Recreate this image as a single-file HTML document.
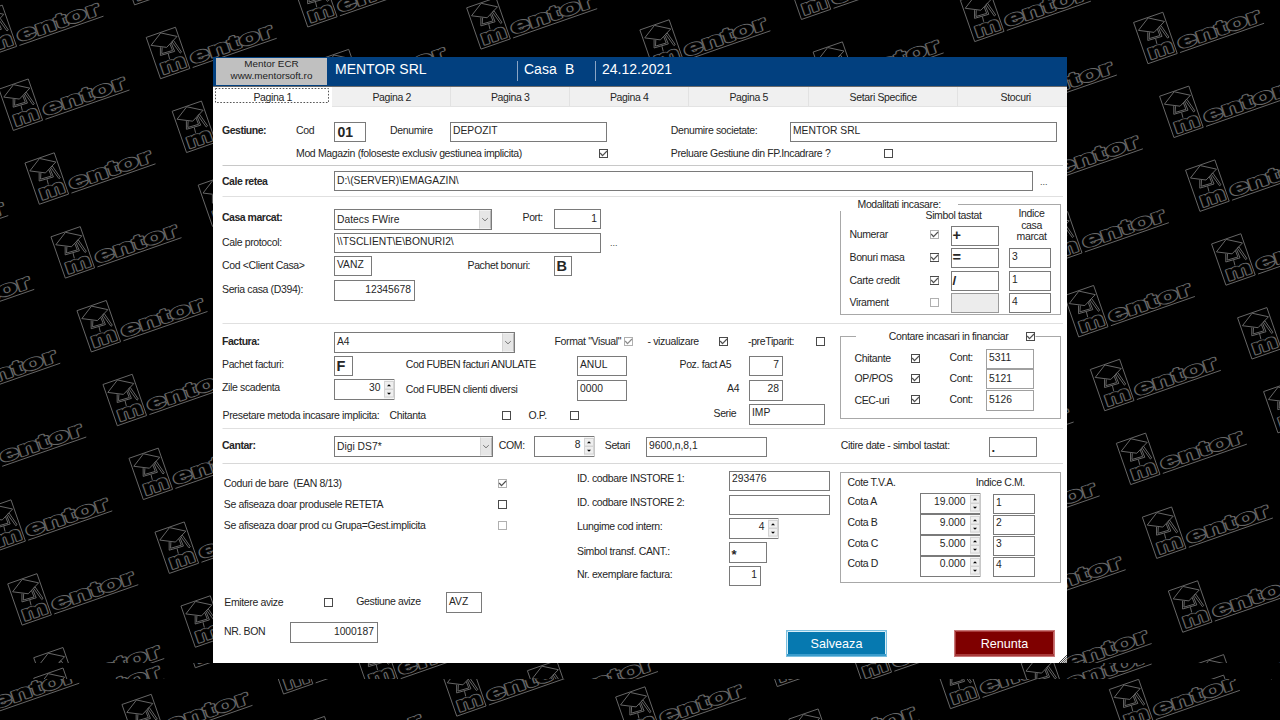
<!DOCTYPE html>
<html><head><meta charset="utf-8"><style>
html,body{margin:0;padding:0;background:#000;width:1280px;height:720px;overflow:hidden}
text{font-family:"Liberation Sans", sans-serif;white-space:pre}
</style></head><body>
<svg width="1280" height="720" viewBox="0 0 1280 720" style="display:block" font-family='"Liberation Sans", sans-serif'><defs><g id="logo" fill="none" stroke="#666666" stroke-width="0.9">
<rect x="0" y="0" width="31" height="43.7"/>
<polygon points="2,9.1 15.25,0.5 29.5,9.2 16.1,16.1"/>
<polyline points="10.2,13.9 7.5,21.7 22.3,22.5 21.8,13.5"/>
<polyline points="11.8,14.6 9.4,20.4 20.6,21.0 20.3,14.2"/>
<polygon points="22.9,12.4 24.8,11.8 28.6,25.4 27,26"/>
<line x1="15.5" y1="22.6" x2="15" y2="28"/>
<g font-family="Liberation Sans" font-weight="bold" font-size="20" stroke-linejoin="round">
<text x="3.5" y="40.5" textLength="26" lengthAdjust="spacingAndGlyphs" fill="#666666" stroke-width="2.4">m</text>
<text x="3.5" y="40.5" textLength="26" lengthAdjust="spacingAndGlyphs" fill="#000" stroke="#000" stroke-width="0.6">m</text>
<text x="35" y="40.5" textLength="86" lengthAdjust="spacingAndGlyphs" fill="#666666" stroke-width="2.4">entor</text>
<text x="35" y="40.5" textLength="86" lengthAdjust="spacingAndGlyphs" fill="#000" stroke="#000" stroke-width="0.6">entor</text>
</g>
<line x1="34" y1="43.7" x2="123" y2="43.7"/>
</g></defs><rect width="1280" height="720" fill="#000"/><defs><g id="bgall"><use href="#logo" transform="translate(-217.50,414.10) rotate(-19.2)"/><use href="#logo" transform="translate(-191.50,487.93) rotate(-19.2)"/><use href="#logo" transform="translate(-165.50,561.76) rotate(-19.2)"/><use href="#logo" transform="translate(-139.50,635.59) rotate(-19.2)"/><use href="#logo" transform="translate(-113.50,709.42) rotate(-19.2)"/><use href="#logo" transform="translate(-226.27,-80.60) rotate(-19.2)"/><use href="#logo" transform="translate(-200.27,-6.77) rotate(-19.2)"/><use href="#logo" transform="translate(-174.27,67.06) rotate(-19.2)"/><use href="#logo" transform="translate(-148.27,140.89) rotate(-19.2)"/><use href="#logo" transform="translate(-122.27,214.72) rotate(-19.2)"/><use href="#logo" transform="translate(-96.27,288.55) rotate(-19.2)"/><use href="#logo" transform="translate(-70.27,362.38) rotate(-19.2)"/><use href="#logo" transform="translate(-44.27,436.21) rotate(-19.2)"/><use href="#logo" transform="translate(-18.27,510.04) rotate(-19.2)"/><use href="#logo" transform="translate(7.73,583.87) rotate(-19.2)"/><use href="#logo" transform="translate(33.73,657.70) rotate(-19.2)"/><use href="#logo" transform="translate(59.73,731.53) rotate(-19.2)"/><use href="#logo" transform="translate(-53.04,-58.49) rotate(-19.2)"/><use href="#logo" transform="translate(-27.04,15.34) rotate(-19.2)"/><use href="#logo" transform="translate(-1.04,89.17) rotate(-19.2)"/><use href="#logo" transform="translate(24.96,163.00) rotate(-19.2)"/><use href="#logo" transform="translate(50.96,236.83) rotate(-19.2)"/><use href="#logo" transform="translate(76.96,310.66) rotate(-19.2)"/><use href="#logo" transform="translate(102.96,384.49) rotate(-19.2)"/><use href="#logo" transform="translate(128.96,458.32) rotate(-19.2)"/><use href="#logo" transform="translate(154.96,532.15) rotate(-19.2)"/><use href="#logo" transform="translate(180.96,605.98) rotate(-19.2)"/><use href="#logo" transform="translate(206.96,679.81) rotate(-19.2)"/><use href="#logo" transform="translate(232.96,753.64) rotate(-19.2)"/><use href="#logo" transform="translate(94.19,-110.21) rotate(-19.2)"/><use href="#logo" transform="translate(120.19,-36.38) rotate(-19.2)"/><use href="#logo" transform="translate(146.19,37.45) rotate(-19.2)"/><use href="#logo" transform="translate(172.19,111.28) rotate(-19.2)"/><use href="#logo" transform="translate(198.19,185.11) rotate(-19.2)"/><use href="#logo" transform="translate(224.19,258.94) rotate(-19.2)"/><use href="#logo" transform="translate(250.19,332.77) rotate(-19.2)"/><use href="#logo" transform="translate(276.19,406.60) rotate(-19.2)"/><use href="#logo" transform="translate(302.19,480.43) rotate(-19.2)"/><use href="#logo" transform="translate(328.19,554.26) rotate(-19.2)"/><use href="#logo" transform="translate(354.19,628.09) rotate(-19.2)"/><use href="#logo" transform="translate(380.19,701.92) rotate(-19.2)"/><use href="#logo" transform="translate(406.19,775.75) rotate(-19.2)"/><use href="#logo" transform="translate(267.42,-88.10) rotate(-19.2)"/><use href="#logo" transform="translate(293.42,-14.27) rotate(-19.2)"/><use href="#logo" transform="translate(319.42,59.56) rotate(-19.2)"/><use href="#logo" transform="translate(345.42,133.39) rotate(-19.2)"/><use href="#logo" transform="translate(371.42,207.22) rotate(-19.2)"/><use href="#logo" transform="translate(397.42,281.05) rotate(-19.2)"/><use href="#logo" transform="translate(423.42,354.88) rotate(-19.2)"/><use href="#logo" transform="translate(449.42,428.71) rotate(-19.2)"/><use href="#logo" transform="translate(475.42,502.54) rotate(-19.2)"/><use href="#logo" transform="translate(501.42,576.37) rotate(-19.2)"/><use href="#logo" transform="translate(527.42,650.20) rotate(-19.2)"/><use href="#logo" transform="translate(553.42,724.03) rotate(-19.2)"/><use href="#logo" transform="translate(440.65,-65.99) rotate(-19.2)"/><use href="#logo" transform="translate(466.65,7.84) rotate(-19.2)"/><use href="#logo" transform="translate(492.65,81.67) rotate(-19.2)"/><use href="#logo" transform="translate(518.65,155.50) rotate(-19.2)"/><use href="#logo" transform="translate(544.65,229.33) rotate(-19.2)"/><use href="#logo" transform="translate(570.65,303.16) rotate(-19.2)"/><use href="#logo" transform="translate(596.65,376.99) rotate(-19.2)"/><use href="#logo" transform="translate(622.65,450.82) rotate(-19.2)"/><use href="#logo" transform="translate(648.65,524.65) rotate(-19.2)"/><use href="#logo" transform="translate(674.65,598.48) rotate(-19.2)"/><use href="#logo" transform="translate(700.65,672.31) rotate(-19.2)"/><use href="#logo" transform="translate(726.65,746.14) rotate(-19.2)"/><use href="#logo" transform="translate(587.88,-117.71) rotate(-19.2)"/><use href="#logo" transform="translate(613.88,-43.88) rotate(-19.2)"/><use href="#logo" transform="translate(639.88,29.95) rotate(-19.2)"/><use href="#logo" transform="translate(665.88,103.78) rotate(-19.2)"/><use href="#logo" transform="translate(691.88,177.61) rotate(-19.2)"/><use href="#logo" transform="translate(717.88,251.44) rotate(-19.2)"/><use href="#logo" transform="translate(743.88,325.27) rotate(-19.2)"/><use href="#logo" transform="translate(769.88,399.10) rotate(-19.2)"/><use href="#logo" transform="translate(795.88,472.93) rotate(-19.2)"/><use href="#logo" transform="translate(821.88,546.76) rotate(-19.2)"/><use href="#logo" transform="translate(847.88,620.59) rotate(-19.2)"/><use href="#logo" transform="translate(873.88,694.42) rotate(-19.2)"/><use href="#logo" transform="translate(899.88,768.25) rotate(-19.2)"/><use href="#logo" transform="translate(761.11,-95.60) rotate(-19.2)"/><use href="#logo" transform="translate(787.11,-21.77) rotate(-19.2)"/><use href="#logo" transform="translate(813.11,52.06) rotate(-19.2)"/><use href="#logo" transform="translate(839.11,125.89) rotate(-19.2)"/><use href="#logo" transform="translate(865.11,199.72) rotate(-19.2)"/><use href="#logo" transform="translate(891.11,273.55) rotate(-19.2)"/><use href="#logo" transform="translate(917.11,347.38) rotate(-19.2)"/><use href="#logo" transform="translate(943.11,421.21) rotate(-19.2)"/><use href="#logo" transform="translate(969.11,495.04) rotate(-19.2)"/><use href="#logo" transform="translate(995.11,568.87) rotate(-19.2)"/><use href="#logo" transform="translate(1021.11,642.70) rotate(-19.2)"/><use href="#logo" transform="translate(1047.11,716.53) rotate(-19.2)"/><use href="#logo" transform="translate(934.34,-73.49) rotate(-19.2)"/><use href="#logo" transform="translate(960.34,0.34) rotate(-19.2)"/><use href="#logo" transform="translate(986.34,74.17) rotate(-19.2)"/><use href="#logo" transform="translate(1012.34,148.00) rotate(-19.2)"/><use href="#logo" transform="translate(1038.34,221.83) rotate(-19.2)"/><use href="#logo" transform="translate(1064.34,295.66) rotate(-19.2)"/><use href="#logo" transform="translate(1090.34,369.49) rotate(-19.2)"/><use href="#logo" transform="translate(1116.34,443.32) rotate(-19.2)"/><use href="#logo" transform="translate(1142.34,517.15) rotate(-19.2)"/><use href="#logo" transform="translate(1168.34,590.98) rotate(-19.2)"/><use href="#logo" transform="translate(1194.34,664.81) rotate(-19.2)"/><use href="#logo" transform="translate(1220.34,738.64) rotate(-19.2)"/><use href="#logo" transform="translate(1107.57,-51.38) rotate(-19.2)"/><use href="#logo" transform="translate(1133.57,22.45) rotate(-19.2)"/><use href="#logo" transform="translate(1159.57,96.28) rotate(-19.2)"/><use href="#logo" transform="translate(1185.57,170.11) rotate(-19.2)"/><use href="#logo" transform="translate(1211.57,243.94) rotate(-19.2)"/><use href="#logo" transform="translate(1237.57,317.77) rotate(-19.2)"/><use href="#logo" transform="translate(1263.57,391.60) rotate(-19.2)"/><use href="#logo" transform="translate(1289.57,465.43) rotate(-19.2)"/><use href="#logo" transform="translate(1315.57,539.26) rotate(-19.2)"/><use href="#logo" transform="translate(1341.57,613.09) rotate(-19.2)"/><use href="#logo" transform="translate(1367.57,686.92) rotate(-19.2)"/><use href="#logo" transform="translate(1393.57,760.75) rotate(-19.2)"/><use href="#logo" transform="translate(1254.80,-103.10) rotate(-19.2)"/><use href="#logo" transform="translate(1280.80,-29.27) rotate(-19.2)"/><use href="#logo" transform="translate(1306.80,44.56) rotate(-19.2)"/><use href="#logo" transform="translate(1332.80,118.39) rotate(-19.2)"/><use href="#logo" transform="translate(1358.80,192.22) rotate(-19.2)"/><use href="#logo" transform="translate(1384.80,266.05) rotate(-19.2)"/></g></defs><g clip-path="url(#cb1)"><use href="#bgall"/></g><g clip-path="url(#cb2)"><use href="#bgall" transform="translate(0,20.5)"/></g><g clip-path="url(#cb3)"><use href="#bgall" transform="translate(-85,24.7)"/></g><defs><clipPath id="cb1"><rect x="0" y="0" width="1280" height="663"/></clipPath><clipPath id="cb2"><rect x="0" y="663" width="1280" height="16"/></clipPath><clipPath id="cb3"><rect x="0" y="679" width="1280" height="41"/></clipPath></defs><rect x="213" y="57" width="854" height="606" fill="#fff"/><rect x="213" y="57" width="854" height="29" fill="#02407f"/><line x1="213" y1="86.5" x2="1067" y2="86.5" stroke="#6a6a6a" stroke-width="1"/><rect x="216" y="58" width="111" height="27" fill="#c0c0c0"/><text x="271.5" y="66.5" font-size="9.9" fill="#222" text-anchor="middle">Mentor ECR</text><text x="271.5" y="78.5" font-size="9.9" fill="#222" text-anchor="middle">www.mentorsoft.ro</text><text x="335" y="74.0" font-size="14" fill="#fff" text-anchor="start">MENTOR SRL</text><line x1="517.5" y1="61" x2="517.5" y2="81" stroke="#8aa4c4" stroke-width="1"/><line x1="595.5" y1="61" x2="595.5" y2="81" stroke="#8aa4c4" stroke-width="1"/><text x="524" y="74.0" font-size="14" fill="#fff" text-anchor="start">Casa</text><text x="565" y="74.0" font-size="14" fill="#fff" text-anchor="start">B</text><text x="602" y="74.0" font-size="14" fill="#fff" text-anchor="start">24.12.2021</text><rect x="213" y="87" width="854" height="19" fill="#f0f0f0"/><line x1="213" y1="106.5" x2="1067" y2="106.5" stroke="#e3e3e3" stroke-width="1"/><rect x="213" y="87" width="119" height="20" fill="#fff"/><rect x="215.5" y="88.5" width="113" height="14" fill="none" stroke="#555" stroke-width="1" stroke-dasharray="1.6,1.6"/><line x1="450.5" y1="87" x2="450.5" y2="106" stroke="#e2e2e2" stroke-width="1"/><line x1="569.5" y1="87" x2="569.5" y2="106" stroke="#e2e2e2" stroke-width="1"/><line x1="688.5" y1="87" x2="688.5" y2="106" stroke="#e2e2e2" stroke-width="1"/><line x1="808.5" y1="87" x2="808.5" y2="106" stroke="#e2e2e2" stroke-width="1"/><line x1="957.5" y1="87" x2="957.5" y2="106" stroke="#e2e2e2" stroke-width="1"/><text x="272.7" y="100.8" font-size="10.5" letter-spacing="-0.36" fill="#262626" text-anchor="middle">Pagina 1</text><text x="391.7" y="100.8" font-size="10.5" letter-spacing="-0.36" fill="#262626" text-anchor="middle">Pagina 2</text><text x="510.2" y="100.8" font-size="10.5" letter-spacing="-0.36" fill="#262626" text-anchor="middle">Pagina 3</text><text x="629.2" y="100.8" font-size="10.5" letter-spacing="-0.36" fill="#262626" text-anchor="middle">Pagina 4</text><text x="748.7" y="100.8" font-size="10.5" letter-spacing="-0.36" fill="#262626" text-anchor="middle">Pagina 5</text><text x="883.2" y="100.8" font-size="10.5" letter-spacing="-0.36" fill="#262626" text-anchor="middle">Setari Specifice</text><text x="1015.7" y="100.8" font-size="10.5" letter-spacing="-0.36" fill="#262626" text-anchor="middle">Stocuri</text><text x="222" y="134.0" font-size="10.5" font-weight="bold" letter-spacing="-0.48" fill="#262626" text-anchor="start">Gestiune:</text><text x="296" y="134.0" font-size="10.5" letter-spacing="-0.36" fill="#262626" text-anchor="start">Cod</text><rect x="334" y="122" width="32" height="20" fill="#fff"/><rect x="334.5" y="122.5" width="31" height="19" fill="none" stroke="#7a7a7a" stroke-width="1"/><text x="337.5" y="136.5" font-size="14" font-weight="bold" fill="#262626" text-anchor="start">01</text><text x="390" y="134.0" font-size="10.5" letter-spacing="-0.36" fill="#262626" text-anchor="start">Denumire</text><rect x="450" y="122" width="157" height="20" fill="#fff"/><rect x="450.5" y="122.5" width="156" height="19" fill="none" stroke="#7a7a7a" stroke-width="1"/><text x="453" y="133.5" font-size="10.3" fill="#262626" text-anchor="start">DEPOZIT</text><text x="670.75" y="134.0" font-size="10.5" letter-spacing="-0.36" fill="#262626" text-anchor="start">Denumire societate:</text><rect x="790" y="122" width="267" height="20" fill="#fff"/><rect x="790.5" y="122.5" width="266" height="19" fill="none" stroke="#7a7a7a" stroke-width="1"/><text x="793" y="133.5" font-size="10.3" fill="#262626" text-anchor="start">MENTOR SRL</text><text x="296" y="157.0" font-size="10.5" letter-spacing="-0.36" fill="#262626" text-anchor="start">Mod Magazin (foloseste exclusiv gestiunea implicita)</text><rect x="599" y="149" width="9" height="9" fill="#fff"/><rect x="599.5" y="149.5" width="8" height="8" fill="none" stroke="#4a4a4a" stroke-width="1"/><polyline points="600.2,153 602.5,155.6 607,151" fill="none" stroke="#505050" stroke-width="1.2"/><text x="670.75" y="157.0" font-size="10.5" letter-spacing="-0.36" fill="#262626" text-anchor="start">Preluare Gestiune din FP.Incadrare ?</text><rect x="884" y="149" width="9" height="9" fill="#fff"/><rect x="884.5" y="149.5" width="8" height="8" fill="none" stroke="#4a4a4a" stroke-width="1"/><line x1="222.5" y1="165.5" x2="1063" y2="165.5" stroke="#c8c8c8" stroke-width="1"/><text x="222" y="184.5" font-size="10.5" font-weight="bold" letter-spacing="-0.48" fill="#262626" text-anchor="start">Cale retea</text><rect x="334" y="171" width="699" height="20" fill="#fff"/><rect x="334.5" y="171.5" width="698" height="19" fill="none" stroke="#7a7a7a" stroke-width="1"/><text x="337" y="184.0" font-size="10.3" fill="#262626" text-anchor="start">D:\(SERVER)\EMAGAZIN\</text><text x="1040" y="185.0" font-size="9" fill="#444" text-anchor="start">...</text><line x1="222.5" y1="196.5" x2="1063" y2="196.5" stroke="#e0e0e0" stroke-width="1"/><text x="222" y="221.0" font-size="10.5" font-weight="bold" letter-spacing="-0.48" fill="#262626" text-anchor="start">Casa marcat:</text><rect x="334" y="209" width="158" height="21" fill="#fff"/><rect x="334.5" y="209.5" width="157" height="20" fill="none" stroke="#7a7a7a" stroke-width="1"/><text x="337" y="222.5" font-size="10.3" fill="#262626" text-anchor="start">Datecs FWire</text><rect x="479" y="210.5" width="12" height="18" fill="#e6e6e6"/><line x1="479.5" y1="210.5" x2="479.5" y2="228.5" stroke="#d4d4d4" stroke-width="1"/><line x1="490.5" y1="210.5" x2="490.5" y2="228.5" stroke="#b8b8b8" stroke-width="1"/><polyline points="482.2,218.2 485.0,220.8 487.8,218.2" fill="none" stroke="#6a6a6a" stroke-width="0.9"/><text x="522.5" y="221.0" font-size="10.5" letter-spacing="-0.36" fill="#262626" text-anchor="start">Port:</text><rect x="554" y="209" width="47" height="20" fill="#fff"/><rect x="554.5" y="209.5" width="46" height="19" fill="none" stroke="#7a7a7a" stroke-width="1"/><text x="597" y="221.5" font-size="10.3" fill="#262626" text-anchor="end">1</text><text x="222" y="245.5" font-size="10.5" letter-spacing="-0.36" fill="#262626" text-anchor="start">Cale protocol:</text><rect x="334" y="233" width="267" height="20" fill="#fff"/><rect x="334.5" y="233.5" width="266" height="19" fill="none" stroke="#7a7a7a" stroke-width="1"/><text x="337" y="245.0" font-size="10.3" fill="#262626" text-anchor="start">\\TSCLIENT\E\BONURI2\</text><text x="610" y="245.5" font-size="9" fill="#444" text-anchor="start">...</text><text x="222" y="268.75" font-size="10.5" letter-spacing="-0.36" fill="#262626" text-anchor="start">Cod &lt;Client Casa&gt;</text><rect x="334" y="256" width="38" height="20" fill="#fff"/><rect x="334.5" y="256.5" width="37" height="19" fill="none" stroke="#7a7a7a" stroke-width="1"/><text x="337" y="268.0" font-size="10.3" fill="#262626" text-anchor="start">VANZ</text><text x="467.5" y="269.0" font-size="10.5" letter-spacing="-0.36" fill="#262626" text-anchor="start">Pachet bonuri:</text><rect x="554" y="256" width="18" height="20" fill="#fff"/><rect x="554.5" y="256.5" width="17" height="19" fill="none" stroke="#7a7a7a" stroke-width="1"/><text x="556.5" y="271.0" font-size="14.5" font-weight="bold" fill="#262626" text-anchor="start">B</text><text x="222" y="292.5" font-size="10.5" letter-spacing="-0.36" fill="#262626" text-anchor="start">Seria casa (D394):</text><rect x="334" y="280" width="81" height="21" fill="#fff"/><rect x="334.5" y="280.5" width="80" height="20" fill="none" stroke="#7a7a7a" stroke-width="1"/><text x="411" y="292.5" font-size="10.3" fill="#262626" text-anchor="end">12345678</text><line x1="840.5" y1="211" x2="840.5" y2="315" stroke="#a8a8a8" stroke-width="1"/><line x1="840.5" y1="314.5" x2="1061" y2="314.5" stroke="#a8a8a8" stroke-width="1"/><line x1="1060.5" y1="204" x2="1060.5" y2="315" stroke="#a8a8a8" stroke-width="1"/><line x1="958" y1="204.5" x2="1061" y2="204.5" stroke="#a8a8a8" stroke-width="1"/><text x="857.5" y="207.5" font-size="10.5" letter-spacing="-0.36" fill="#262626" text-anchor="start">Modalitati incasare:</text><text x="925.5" y="219.0" font-size="10.5" letter-spacing="-0.36" fill="#262626" text-anchor="start">Simbol tastat</text><text x="1031.5" y="217.0" font-size="10.5" letter-spacing="-0.36" fill="#262626" text-anchor="middle">Indice</text><text x="1031.5" y="228.5" font-size="10.5" letter-spacing="-0.36" fill="#262626" text-anchor="middle">casa</text><text x="1031.5" y="240.0" font-size="10.5" letter-spacing="-0.36" fill="#262626" text-anchor="middle">marcat</text><text x="849.5" y="238.0" font-size="10.5" letter-spacing="-0.36" fill="#262626" text-anchor="start">Numerar</text><rect x="930" y="230" width="9" height="9" fill="#fff"/><rect x="930.5" y="230.5" width="8" height="8" fill="none" stroke="#b0b0b0" stroke-width="1"/><polyline points="931.2,234 933.5,236.6 938,232" fill="none" stroke="#505050" stroke-width="1.2"/><rect x="951" y="226" width="48" height="20" fill="#fff"/><rect x="951.5" y="226.5" width="47" height="19" fill="none" stroke="#7a7a7a" stroke-width="1"/><text x="952.5" y="240.0" font-size="14.5" font-weight="bold" fill="#262626" text-anchor="start">+</text><text x="849.5" y="260.5" font-size="10.5" letter-spacing="-0.36" fill="#262626" text-anchor="start">Bonuri masa</text><rect x="930" y="253" width="9" height="9" fill="#fff"/><line x1="930" y1="253.5" x2="939" y2="253.5" stroke="#4a4a4a" stroke-width="1"/><line x1="930" y1="261.5" x2="939" y2="261.5" stroke="#4a4a4a" stroke-width="1"/><line x1="930.5" y1="254" x2="930.5" y2="261" stroke="#8a8a8a" stroke-width="1"/><line x1="938.5" y1="254" x2="938.5" y2="261" stroke="#8a8a8a" stroke-width="1"/><polyline points="931.2,257 933.5,259.6 938,255" fill="none" stroke="#505050" stroke-width="1.2"/><rect x="951" y="248" width="48" height="20" fill="#fff"/><rect x="951.5" y="248.5" width="47" height="19" fill="none" stroke="#7a7a7a" stroke-width="1"/><text x="952.5" y="261.5" font-size="14.5" font-weight="bold" fill="#262626" text-anchor="start">=</text><rect x="1009" y="248" width="42" height="20" fill="#fff"/><rect x="1009.5" y="248.5" width="41" height="19" fill="none" stroke="#7a7a7a" stroke-width="1"/><text x="1012" y="260.0" font-size="10.3" fill="#262626" text-anchor="start">3</text><text x="849.5" y="283.5" font-size="10.5" letter-spacing="-0.36" fill="#262626" text-anchor="start">Carte credit</text><rect x="930" y="276" width="9" height="9" fill="#fff"/><line x1="930" y1="276.5" x2="939" y2="276.5" stroke="#4a4a4a" stroke-width="1"/><line x1="930" y1="284.5" x2="939" y2="284.5" stroke="#4a4a4a" stroke-width="1"/><line x1="930.5" y1="277" x2="930.5" y2="284" stroke="#8a8a8a" stroke-width="1"/><line x1="938.5" y1="277" x2="938.5" y2="284" stroke="#8a8a8a" stroke-width="1"/><polyline points="931.2,280 933.5,282.6 938,278" fill="none" stroke="#505050" stroke-width="1.2"/><rect x="951" y="271" width="48" height="20" fill="#fff"/><rect x="951.5" y="271.5" width="47" height="19" fill="none" stroke="#7a7a7a" stroke-width="1"/><text x="952.5" y="285.0" font-size="13.5" font-weight="bold" fill="#262626" text-anchor="start">/</text><rect x="1009" y="271" width="42" height="20" fill="#fff"/><rect x="1009.5" y="271.5" width="41" height="19" fill="none" stroke="#7a7a7a" stroke-width="1"/><text x="1012" y="282.5" font-size="10.3" fill="#262626" text-anchor="start">1</text><text x="849.5" y="306.0" font-size="10.5" letter-spacing="-0.36" fill="#262626" text-anchor="start">Virament</text><rect x="930" y="298" width="9" height="9" fill="#fff"/><rect x="930.5" y="298.5" width="8" height="8" fill="none" stroke="#b0b0b0" stroke-width="1"/><rect x="951" y="293" width="48" height="20" fill="#ececec"/><rect x="951.5" y="293.5" width="47" height="19" fill="none" stroke="#9a9a9a" stroke-width="1"/><rect x="1009" y="293" width="42" height="20" fill="#fff"/><rect x="1009.5" y="293.5" width="41" height="19" fill="none" stroke="#7a7a7a" stroke-width="1"/><text x="1012" y="305.0" font-size="10.3" fill="#262626" text-anchor="start">4</text><line x1="222.5" y1="323.5" x2="1063" y2="323.5" stroke="#e0e0e0" stroke-width="1"/><text x="222" y="344.5" font-size="10.5" font-weight="bold" letter-spacing="-0.48" fill="#262626" text-anchor="start">Factura:</text><rect x="334" y="332" width="181" height="21" fill="#fff"/><rect x="334.5" y="332.5" width="180" height="20" fill="none" stroke="#7a7a7a" stroke-width="1"/><text x="337" y="344.5" font-size="10.3" fill="#262626" text-anchor="start">A4</text><rect x="502" y="333.5" width="12" height="18" fill="#e6e6e6"/><line x1="502.5" y1="333.5" x2="502.5" y2="351.5" stroke="#d4d4d4" stroke-width="1"/><line x1="513.5" y1="333.5" x2="513.5" y2="351.5" stroke="#b8b8b8" stroke-width="1"/><polyline points="505.2,341.2 508.0,343.8 510.8,341.2" fill="none" stroke="#6a6a6a" stroke-width="0.9"/><text x="554.5" y="345.0" font-size="10.5" letter-spacing="-0.36" fill="#262626" text-anchor="start">Format "Visual"</text><rect x="624" y="337" width="9" height="9" fill="#fff"/><rect x="624.5" y="337.5" width="8" height="8" fill="none" stroke="#b0b0b0" stroke-width="1"/><polyline points="625.2,341 627.5,343.6 632,339" fill="none" stroke="#8a8a8a" stroke-width="1.2"/><text x="647.5" y="345.0" font-size="10.5" letter-spacing="-0.36" fill="#262626" text-anchor="start">- vizualizare</text><rect x="719" y="337" width="9" height="9" fill="#fff"/><rect x="719.5" y="337.5" width="8" height="8" fill="none" stroke="#4a4a4a" stroke-width="1"/><polyline points="720.2,341 722.5,343.6 727,339" fill="none" stroke="#505050" stroke-width="1.2"/><text x="748" y="345.0" font-size="10.5" letter-spacing="-0.36" fill="#262626" text-anchor="start">-preTiparit:</text><rect x="816" y="337" width="9" height="9" fill="#fff"/><rect x="816.5" y="337.5" width="8" height="8" fill="none" stroke="#4a4a4a" stroke-width="1"/><text x="222" y="367.5" font-size="10.5" letter-spacing="-0.36" fill="#262626" text-anchor="start">Pachet facturi:</text><rect x="334" y="356" width="19" height="20" fill="#fff"/><rect x="334.5" y="356.5" width="18" height="19" fill="none" stroke="#7a7a7a" stroke-width="1"/><text x="336.5" y="371.0" font-size="14.5" font-weight="bold" fill="#262626" text-anchor="start">F</text><text x="405.75" y="367.5" font-size="10.5" letter-spacing="-0.36" fill="#262626" text-anchor="start">Cod FUBEN facturi ANULATE</text><rect x="577" y="356" width="50" height="20" fill="#fff"/><rect x="577.5" y="356.5" width="49" height="19" fill="none" stroke="#7a7a7a" stroke-width="1"/><text x="580" y="368.0" font-size="10.3" fill="#262626" text-anchor="start">ANUL</text><text x="679.5" y="367.5" font-size="10.5" letter-spacing="-0.36" fill="#262626" text-anchor="start">Poz. fact A5</text><rect x="749" y="356" width="34" height="20" fill="#fff"/><rect x="749.5" y="356.5" width="33" height="19" fill="none" stroke="#7a7a7a" stroke-width="1"/><text x="779" y="367.5" font-size="10.3" fill="#262626" text-anchor="end">7</text><text x="222" y="391.0" font-size="10.5" letter-spacing="-0.36" fill="#262626" text-anchor="start">Zile scadenta</text><rect x="334" y="379" width="61" height="21" fill="#fff"/><line x1="334" y1="379.5" x2="395" y2="379.5" stroke="#7a7a7a" stroke-width="1"/><line x1="334" y1="399.5" x2="395" y2="399.5" stroke="#7a7a7a" stroke-width="1"/><line x1="334.5" y1="379" x2="334.5" y2="400" stroke="#7a7a7a" stroke-width="1"/><line x1="394.5" y1="379" x2="394.5" y2="400" stroke="#c8c8c8" stroke-width="1"/><rect x="384" y="380.5" width="10" height="18" fill="#efefef"/><rect x="384.5" y="381.5" width="9" height="7.5" fill="none" stroke="#d4d4d4" stroke-width="1"/><rect x="384.5" y="389.5" width="9" height="7.5" fill="none" stroke="#d4d4d4" stroke-width="1"/><polygon points="387,386.25 391,386.25 389,384.25" fill="#000"/><polygon points="387,392.75 391,392.75 389,394.75" fill="#000"/><text x="380.5" y="390.5" font-size="10.3" fill="#262626" text-anchor="end">30</text><text x="405.75" y="392.5" font-size="10.5" letter-spacing="-0.36" fill="#262626" text-anchor="start">Cod FUBEN clienti diversi</text><rect x="577" y="380" width="50" height="21" fill="#fff"/><rect x="577.5" y="380.5" width="49" height="20" fill="none" stroke="#7a7a7a" stroke-width="1"/><text x="580" y="392.0" font-size="10.3" fill="#262626" text-anchor="start">0000</text><text x="727" y="392.0" font-size="10.5" letter-spacing="-0.36" fill="#262626" text-anchor="start">A4</text><rect x="749" y="380" width="34" height="21" fill="#fff"/><rect x="749.5" y="380.5" width="33" height="20" fill="none" stroke="#7a7a7a" stroke-width="1"/><text x="779" y="391.5" font-size="10.3" fill="#262626" text-anchor="end">28</text><text x="222.5" y="419.0" font-size="10.5" letter-spacing="-0.36" fill="#262626" text-anchor="start">Presetare metoda incasare implicita:</text><text x="389.5" y="419.0" font-size="10.5" letter-spacing="-0.36" fill="#262626" text-anchor="start">Chitanta</text><rect x="502" y="411" width="9" height="9" fill="#fff"/><rect x="502.5" y="411.5" width="8" height="8" fill="none" stroke="#4a4a4a" stroke-width="1"/><text x="528.5" y="419.0" font-size="10.5" letter-spacing="-0.36" fill="#262626" text-anchor="start">O.P.</text><rect x="570" y="411" width="9" height="9" fill="#fff"/><rect x="570.5" y="411.5" width="8" height="8" fill="none" stroke="#4a4a4a" stroke-width="1"/><text x="713.5" y="417.0" font-size="10.5" letter-spacing="-0.36" fill="#262626" text-anchor="start">Serie</text><rect x="749" y="404" width="76" height="21" fill="#fff"/><rect x="749.5" y="404.5" width="75" height="20" fill="none" stroke="#7a7a7a" stroke-width="1"/><text x="752" y="416.0" font-size="10.3" fill="#262626" text-anchor="start">IMP</text><line x1="840.5" y1="336.5" x2="856" y2="336.5" stroke="#a8a8a8" stroke-width="1"/><line x1="1035.5" y1="336.5" x2="1061" y2="336.5" stroke="#a8a8a8" stroke-width="1"/><line x1="840.5" y1="336" x2="840.5" y2="419" stroke="#a8a8a8" stroke-width="1"/><line x1="1060.5" y1="336" x2="1060.5" y2="419" stroke="#a8a8a8" stroke-width="1"/><line x1="840.5" y1="418.5" x2="1061" y2="418.5" stroke="#a8a8a8" stroke-width="1"/><text x="888.75" y="340.0" font-size="10.5" letter-spacing="-0.36" fill="#262626" text-anchor="start">Contare incasari in financiar</text><rect x="1026" y="332" width="9" height="9" fill="#fff"/><rect x="1026.5" y="332.5" width="8" height="8" fill="none" stroke="#4a4a4a" stroke-width="1"/><polyline points="1027.2,336 1029.5,338.6 1034,334" fill="none" stroke="#505050" stroke-width="1.2"/><text x="854.5" y="361.5" font-size="10.5" letter-spacing="-0.36" fill="#262626" text-anchor="start">Chitante</text><rect x="911" y="354" width="9" height="9" fill="#fff"/><rect x="911.5" y="354.5" width="8" height="8" fill="none" stroke="#4a4a4a" stroke-width="1"/><polyline points="912.2,358 914.5,360.6 919,356" fill="none" stroke="#505050" stroke-width="1.2"/><text x="949.5" y="360.5" font-size="10.5" letter-spacing="-0.36" fill="#262626" text-anchor="start">Cont:</text><rect x="986" y="349" width="48" height="20" fill="#fff"/><rect x="986.5" y="349.5" width="47" height="19" fill="none" stroke="#a0a0a0" stroke-width="1"/><text x="989" y="361.0" font-size="10.3" fill="#262626" text-anchor="start">5311</text><text x="854.5" y="382.0" font-size="10.5" letter-spacing="-0.36" fill="#262626" text-anchor="start">OP/POS</text><rect x="911" y="374" width="9" height="9" fill="#fff"/><rect x="911.5" y="374.5" width="8" height="8" fill="none" stroke="#4a4a4a" stroke-width="1"/><polyline points="912.2,378 914.5,380.6 919,376" fill="none" stroke="#505050" stroke-width="1.2"/><text x="949.5" y="381.5" font-size="10.5" letter-spacing="-0.36" fill="#262626" text-anchor="start">Cont:</text><rect x="986" y="369" width="48" height="20" fill="#fff"/><rect x="986.5" y="369.5" width="47" height="19" fill="none" stroke="#a0a0a0" stroke-width="1"/><text x="989" y="381.5" font-size="10.3" fill="#262626" text-anchor="start">5121</text><text x="854.5" y="403.5" font-size="10.5" letter-spacing="-0.36" fill="#262626" text-anchor="start">CEC-uri</text><rect x="911" y="395" width="9" height="9" fill="#fff"/><rect x="911.5" y="395.5" width="8" height="8" fill="none" stroke="#4a4a4a" stroke-width="1"/><polyline points="912.2,399 914.5,401.6 919,397" fill="none" stroke="#505050" stroke-width="1.2"/><text x="949.5" y="402.5" font-size="10.5" letter-spacing="-0.36" fill="#262626" text-anchor="start">Cont:</text><rect x="986" y="390" width="48" height="21" fill="#fff"/><rect x="986.5" y="390.5" width="47" height="20" fill="none" stroke="#a0a0a0" stroke-width="1"/><text x="989" y="402.5" font-size="10.3" fill="#262626" text-anchor="start">5126</text><line x1="222.5" y1="428.5" x2="1063" y2="428.5" stroke="#e0e0e0" stroke-width="1"/><text x="222" y="448.75" font-size="10.5" font-weight="bold" letter-spacing="-0.48" fill="#262626" text-anchor="start">Cantar:</text><rect x="334" y="436" width="159" height="21" fill="#fff"/><rect x="334.5" y="436.5" width="158" height="20" fill="none" stroke="#7a7a7a" stroke-width="1"/><text x="337" y="449.5" font-size="10.3" fill="#262626" text-anchor="start">Digi DS7*</text><rect x="480" y="437.5" width="12" height="18" fill="#e6e6e6"/><line x1="480.5" y1="437.5" x2="480.5" y2="455.5" stroke="#d4d4d4" stroke-width="1"/><line x1="491.5" y1="437.5" x2="491.5" y2="455.5" stroke="#b8b8b8" stroke-width="1"/><polyline points="483.2,445.2 486.0,447.8 488.8,445.2" fill="none" stroke="#6a6a6a" stroke-width="0.9"/><text x="498.75" y="449.0" font-size="10.5" letter-spacing="-0.36" fill="#262626" text-anchor="start">COM:</text><rect x="534" y="436" width="61" height="21" fill="#fff"/><line x1="534" y1="436.5" x2="595" y2="436.5" stroke="#7a7a7a" stroke-width="1"/><line x1="534" y1="456.5" x2="595" y2="456.5" stroke="#7a7a7a" stroke-width="1"/><line x1="534.5" y1="436" x2="534.5" y2="457" stroke="#7a7a7a" stroke-width="1"/><line x1="594.5" y1="436" x2="594.5" y2="457" stroke="#c8c8c8" stroke-width="1"/><rect x="584" y="437.5" width="10" height="18" fill="#efefef"/><rect x="584.5" y="438.5" width="9" height="7.5" fill="none" stroke="#d4d4d4" stroke-width="1"/><rect x="584.5" y="446.5" width="9" height="7.5" fill="none" stroke="#d4d4d4" stroke-width="1"/><polygon points="587,443.25 591,443.25 589,441.25" fill="#000"/><polygon points="587,449.75 591,449.75 589,451.75" fill="#000"/><text x="580.5" y="447.5" font-size="10.3" fill="#262626" text-anchor="end">8</text><text x="604.75" y="449.2" font-size="10.5" letter-spacing="-0.36" fill="#262626" text-anchor="start">Setari</text><rect x="646" y="437" width="121" height="20" fill="#fff"/><rect x="646.5" y="437.5" width="120" height="19" fill="none" stroke="#7a7a7a" stroke-width="1"/><text x="649" y="449.0" font-size="10.3" fill="#262626" text-anchor="start">9600,n,8,1</text><text x="840.75" y="448.75" font-size="10.5" letter-spacing="-0.36" fill="#262626" text-anchor="start">Citire date - simbol tastat:</text><rect x="989" y="437" width="48" height="20" fill="#fff"/><rect x="989.5" y="437.5" width="47" height="19" fill="none" stroke="#7a7a7a" stroke-width="1"/><text x="991.5" y="451.5" font-size="13" font-weight="bold" fill="#262626" text-anchor="start">.</text><line x1="222.5" y1="463.5" x2="1063" y2="463.5" stroke="#d8d8d8" stroke-width="1"/><text x="223.75" y="487.0" font-size="10.5" letter-spacing="-0.36" fill="#262626" text-anchor="start">Coduri de bare  (EAN 8/13)</text><rect x="498" y="479" width="9" height="9" fill="#fff"/><rect x="498.5" y="479.5" width="8" height="8" fill="none" stroke="#b0b0b0" stroke-width="1"/><polyline points="499.2,483 501.5,485.6 506,481" fill="none" stroke="#505050" stroke-width="1.2"/><text x="223.75" y="507.5" font-size="10.5" letter-spacing="-0.36" fill="#262626" text-anchor="start">Se afiseaza doar produsele RETETA</text><rect x="498" y="500" width="9" height="9" fill="#fff"/><rect x="498.5" y="500.5" width="8" height="8" fill="none" stroke="#4a4a4a" stroke-width="1"/><text x="223.75" y="529.0" font-size="10.5" letter-spacing="-0.36" fill="#262626" text-anchor="start">Se afiseaza doar prod cu Grupa=Gest.implicita</text><rect x="498" y="521" width="9" height="9" fill="#fff"/><rect x="498.5" y="521.5" width="8" height="8" fill="none" stroke="#b0b0b0" stroke-width="1"/><text x="577" y="482.0" font-size="10.5" letter-spacing="-0.36" fill="#262626" text-anchor="start">ID. codbare INSTORE 1:</text><rect x="729" y="471" width="101" height="20" fill="#fff"/><rect x="729.5" y="471.5" width="100" height="19" fill="none" stroke="#7a7a7a" stroke-width="1"/><text x="732" y="482.0" font-size="10.3" fill="#262626" text-anchor="start">293476</text><text x="577" y="506.0" font-size="10.5" letter-spacing="-0.36" fill="#262626" text-anchor="start">ID. codbare INSTORE 2:</text><rect x="729" y="495" width="101" height="20" fill="#fff"/><rect x="729.5" y="495.5" width="100" height="19" fill="none" stroke="#7a7a7a" stroke-width="1"/><text x="577" y="530.0" font-size="10.5" letter-spacing="-0.36" fill="#262626" text-anchor="start">Lungime cod intern:</text><rect x="729" y="518" width="50" height="21" fill="#fff"/><line x1="729" y1="518.5" x2="779" y2="518.5" stroke="#7a7a7a" stroke-width="1"/><line x1="729" y1="538.5" x2="779" y2="538.5" stroke="#7a7a7a" stroke-width="1"/><line x1="729.5" y1="518" x2="729.5" y2="539" stroke="#7a7a7a" stroke-width="1"/><line x1="778.5" y1="518" x2="778.5" y2="539" stroke="#c8c8c8" stroke-width="1"/><rect x="768" y="519.5" width="10" height="18" fill="#efefef"/><rect x="768.5" y="520.5" width="9" height="7.5" fill="none" stroke="#d4d4d4" stroke-width="1"/><rect x="768.5" y="528.5" width="9" height="7.5" fill="none" stroke="#d4d4d4" stroke-width="1"/><polygon points="771,525.25 775,525.25 773,523.25" fill="#000"/><polygon points="771,531.75 775,531.75 773,533.75" fill="#000"/><text x="764.5" y="530.0" font-size="10.3" fill="#262626" text-anchor="end">4</text><text x="577" y="554.5" font-size="10.5" letter-spacing="-0.36" fill="#262626" text-anchor="start">Simbol transf. CANT.:</text><rect x="729" y="542" width="38" height="21" fill="#fff"/><rect x="729.5" y="542.5" width="37" height="20" fill="none" stroke="#7a7a7a" stroke-width="1"/><text x="731.5" y="558.5" font-size="13" font-weight="bold" fill="#262626" text-anchor="start">*</text><text x="577" y="578.0" font-size="10.5" letter-spacing="-0.36" fill="#262626" text-anchor="start">Nr. exemplare factura:</text><rect x="729" y="566" width="32" height="20" fill="#fff"/><rect x="729.5" y="566.5" width="31" height="19" fill="none" stroke="#7a7a7a" stroke-width="1"/><text x="757" y="577.5" font-size="10.3" fill="#262626" text-anchor="end">1</text><line x1="840.5" y1="472.5" x2="1061" y2="472.5" stroke="#a8a8a8" stroke-width="1"/><line x1="840.5" y1="472" x2="840.5" y2="583" stroke="#a8a8a8" stroke-width="1"/><line x1="1060.5" y1="472" x2="1060.5" y2="583" stroke="#a8a8a8" stroke-width="1"/><line x1="840.5" y1="582.5" x2="1061" y2="582.5" stroke="#a8a8a8" stroke-width="1"/><text x="847.5" y="485.75" font-size="10.5" letter-spacing="-0.36" fill="#262626" text-anchor="start">Cote T.V.A.</text><text x="975.75" y="485.75" font-size="10.5" letter-spacing="-0.36" fill="#262626" text-anchor="start">Indice C.M.</text><text x="847.5" y="505.0" font-size="10.5" letter-spacing="-0.36" fill="#262626" text-anchor="start">Cota A</text><rect x="920" y="493" width="61" height="21" fill="#fff"/><line x1="920" y1="493.5" x2="981" y2="493.5" stroke="#7a7a7a" stroke-width="1"/><line x1="920" y1="513.5" x2="981" y2="513.5" stroke="#7a7a7a" stroke-width="1"/><line x1="920.5" y1="493" x2="920.5" y2="514" stroke="#7a7a7a" stroke-width="1"/><line x1="980.5" y1="493" x2="980.5" y2="514" stroke="#c8c8c8" stroke-width="1"/><rect x="970" y="494.5" width="10" height="18" fill="#efefef"/><rect x="970.5" y="495.5" width="9" height="7.5" fill="none" stroke="#d4d4d4" stroke-width="1"/><rect x="970.5" y="503.5" width="9" height="7.5" fill="none" stroke="#d4d4d4" stroke-width="1"/><polygon points="973,500.25 977,500.25 975,498.25" fill="#000"/><polygon points="973,506.75 977,506.75 975,508.75" fill="#000"/><text x="965.5" y="505.0" font-size="10.3" fill="#262626" text-anchor="end">19.000</text><rect x="993" y="494" width="42" height="20" fill="#fff"/><rect x="993.5" y="494.5" width="41" height="19" fill="none" stroke="#7a7a7a" stroke-width="1"/><text x="996" y="505.5" font-size="10.3" fill="#262626" text-anchor="start">1</text><text x="847.5" y="525.5" font-size="10.5" letter-spacing="-0.36" fill="#262626" text-anchor="start">Cota B</text><rect x="920" y="514" width="61" height="21" fill="#fff"/><line x1="920" y1="514.5" x2="981" y2="514.5" stroke="#7a7a7a" stroke-width="1"/><line x1="920" y1="534.5" x2="981" y2="534.5" stroke="#7a7a7a" stroke-width="1"/><line x1="920.5" y1="514" x2="920.5" y2="535" stroke="#7a7a7a" stroke-width="1"/><line x1="980.5" y1="514" x2="980.5" y2="535" stroke="#c8c8c8" stroke-width="1"/><rect x="970" y="515.5" width="10" height="18" fill="#efefef"/><rect x="970.5" y="516.5" width="9" height="7.5" fill="none" stroke="#d4d4d4" stroke-width="1"/><rect x="970.5" y="524.5" width="9" height="7.5" fill="none" stroke="#d4d4d4" stroke-width="1"/><polygon points="973,521.25 977,521.25 975,519.25" fill="#000"/><polygon points="973,527.75 977,527.75 975,529.75" fill="#000"/><text x="965.5" y="525.5" font-size="10.3" fill="#262626" text-anchor="end">9.000</text><rect x="993" y="515" width="42" height="20" fill="#fff"/><rect x="993.5" y="515.5" width="41" height="19" fill="none" stroke="#7a7a7a" stroke-width="1"/><text x="996" y="526.0" font-size="10.3" fill="#262626" text-anchor="start">2</text><text x="847.5" y="546.5" font-size="10.5" letter-spacing="-0.36" fill="#262626" text-anchor="start">Cota C</text><rect x="920" y="535" width="61" height="21" fill="#fff"/><line x1="920" y1="535.5" x2="981" y2="535.5" stroke="#7a7a7a" stroke-width="1"/><line x1="920" y1="555.5" x2="981" y2="555.5" stroke="#7a7a7a" stroke-width="1"/><line x1="920.5" y1="535" x2="920.5" y2="556" stroke="#7a7a7a" stroke-width="1"/><line x1="980.5" y1="535" x2="980.5" y2="556" stroke="#c8c8c8" stroke-width="1"/><rect x="970" y="536.5" width="10" height="18" fill="#efefef"/><rect x="970.5" y="537.5" width="9" height="7.5" fill="none" stroke="#d4d4d4" stroke-width="1"/><rect x="970.5" y="545.5" width="9" height="7.5" fill="none" stroke="#d4d4d4" stroke-width="1"/><polygon points="973,542.25 977,542.25 975,540.25" fill="#000"/><polygon points="973,548.75 977,548.75 975,550.75" fill="#000"/><text x="965.5" y="546.5" font-size="10.3" fill="#262626" text-anchor="end">5.000</text><rect x="993" y="536" width="42" height="20" fill="#fff"/><rect x="993.5" y="536.5" width="41" height="19" fill="none" stroke="#7a7a7a" stroke-width="1"/><text x="996" y="547.0" font-size="10.3" fill="#262626" text-anchor="start">3</text><text x="847.5" y="567.0" font-size="10.5" letter-spacing="-0.36" fill="#262626" text-anchor="start">Cota D</text><rect x="920" y="556" width="61" height="21" fill="#fff"/><line x1="920" y1="556.5" x2="981" y2="556.5" stroke="#7a7a7a" stroke-width="1"/><line x1="920" y1="576.5" x2="981" y2="576.5" stroke="#7a7a7a" stroke-width="1"/><line x1="920.5" y1="556" x2="920.5" y2="577" stroke="#7a7a7a" stroke-width="1"/><line x1="980.5" y1="556" x2="980.5" y2="577" stroke="#c8c8c8" stroke-width="1"/><rect x="970" y="557.5" width="10" height="18" fill="#efefef"/><rect x="970.5" y="558.5" width="9" height="7.5" fill="none" stroke="#d4d4d4" stroke-width="1"/><rect x="970.5" y="566.5" width="9" height="7.5" fill="none" stroke="#d4d4d4" stroke-width="1"/><polygon points="973,563.25 977,563.25 975,561.25" fill="#000"/><polygon points="973,569.75 977,569.75 975,571.75" fill="#000"/><text x="965.5" y="567.0" font-size="10.3" fill="#262626" text-anchor="end">0.000</text><rect x="993" y="557" width="42" height="20" fill="#fff"/><rect x="993.5" y="557.5" width="41" height="19" fill="none" stroke="#7a7a7a" stroke-width="1"/><text x="996" y="567.5" font-size="10.3" fill="#262626" text-anchor="start">4</text><text x="224.25" y="606.0" font-size="10.5" letter-spacing="-0.36" fill="#262626" text-anchor="start">Emitere avize</text><rect x="324" y="598" width="9" height="9" fill="#fff"/><rect x="324.5" y="598.5" width="8" height="8" fill="none" stroke="#4a4a4a" stroke-width="1"/><text x="356.25" y="605.0" font-size="10.5" letter-spacing="-0.36" fill="#262626" text-anchor="start">Gestiune avize</text><rect x="446" y="592" width="36" height="21" fill="#fff"/><rect x="446.5" y="592.5" width="35" height="20" fill="none" stroke="#7a7a7a" stroke-width="1"/><text x="449" y="604.5" font-size="10.3" fill="#262626" text-anchor="start">AVZ</text><text x="224" y="635.0" font-size="10.5" letter-spacing="-0.36" fill="#262626" text-anchor="start">NR. BON</text><rect x="290" y="622" width="88" height="21" fill="#fff"/><rect x="290.5" y="622.5" width="87" height="20" fill="none" stroke="#7a7a7a" stroke-width="1"/><text x="374" y="634.5" font-size="10.3" fill="#262626" text-anchor="end">1000187</text><rect x="786" y="630" width="101" height="27" fill="#0679b0"/><rect x="786.5" y="630.5" width="100" height="26" fill="none" stroke="#7cc0e0" stroke-width="1"/><line x1="787.5" y1="631.5" x2="885.5" y2="631.5" stroke="#d8eef8" stroke-width="1"/><line x1="787.5" y1="631.5" x2="787.5" y2="655" stroke="#d8eef8" stroke-width="1"/><line x1="885.5" y1="631.5" x2="885.5" y2="655" stroke="#d8eef8" stroke-width="1"/><line x1="787" y1="655.5" x2="886" y2="655.5" stroke="#3a9ccc" stroke-width="1"/><line x1="787" y1="654.5" x2="886" y2="654.5" stroke="#3a9ccc" stroke-width="1"/><text x="836.5" y="647.7" font-size="12.6" fill="#fff" text-anchor="middle">Salveaza</text><rect x="954" y="630" width="101" height="27" fill="#7f0000"/><rect x="954.5" y="630.5" width="100" height="26" fill="none" stroke="#c87878" stroke-width="1"/><line x1="955.5" y1="631.5" x2="1053.5" y2="631.5" stroke="#a83a3a" stroke-width="1"/><line x1="955.5" y1="631.5" x2="955.5" y2="655" stroke="#a83a3a" stroke-width="1"/><line x1="1053.5" y1="631.5" x2="1053.5" y2="655" stroke="#c06060" stroke-width="1"/><line x1="955" y1="655.5" x2="1054" y2="655.5" stroke="#a83a3a" stroke-width="1"/><line x1="955" y1="654.5" x2="1054" y2="654.5" stroke="#a83a3a" stroke-width="1"/><text x="1004.5" y="647.7" font-size="12.6" fill="#fff" text-anchor="middle">Renunta</text><line x1="1065.4" y1="663" x2="1067" y2="661.4" stroke="#1a1a1a" stroke-width="0.9"/><line x1="1063.3" y1="663" x2="1067" y2="659.3" stroke="#1a1a1a" stroke-width="0.9"/><line x1="1061.2" y1="663" x2="1067" y2="657.2" stroke="#1a1a1a" stroke-width="0.9"/><line x1="1059.1" y1="663" x2="1067" y2="655.1" stroke="#1a1a1a" stroke-width="0.9"/></svg>
</body></html>
